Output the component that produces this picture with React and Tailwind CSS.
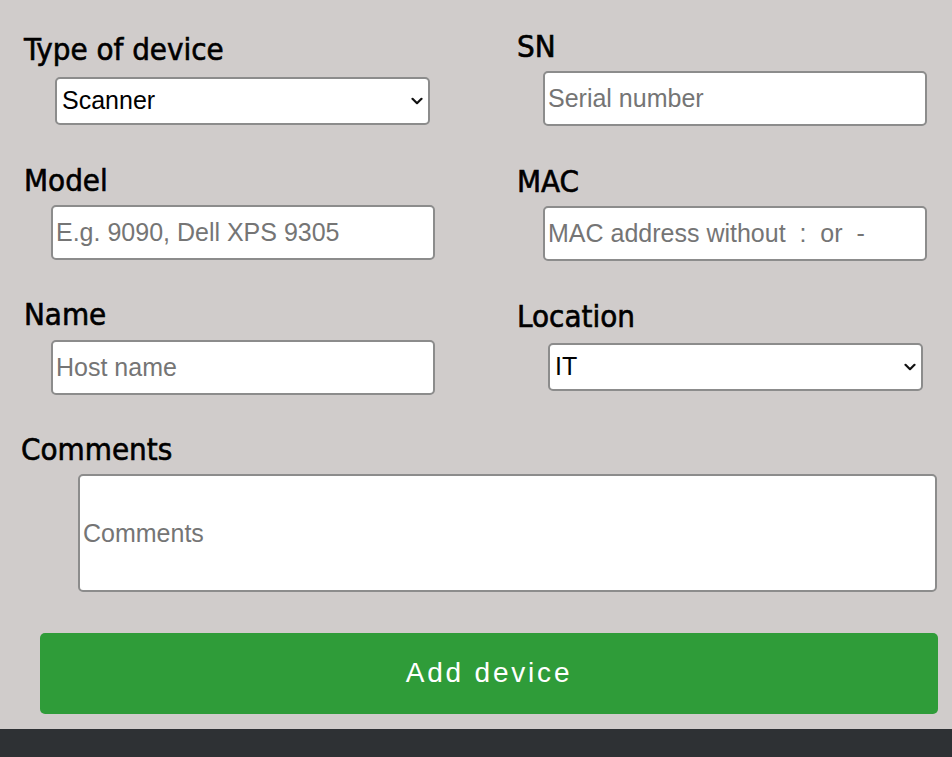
import React from 'react';

const labelFont = { fontFamily: '"DejaVu Sans Condensed", "DejaVu Sans", sans-serif' };

const Label = ({ children, className = '' }) => (
  <label
    className={`block h-[36px] leading-[36px] text-[31px] text-black [-webkit-text-stroke:0.6px_black] ${className}`}
    style={labelFont}
  >
    {children}
  </label>
);

const inputClasses =
  'block h-[55px] border-2 border-[#8c8c8c] rounded-[5px] bg-white px-[3px] text-[25px] text-black placeholder:text-[#757575] outline-none';

const Select = ({ className = '', options, value }) => (
  <div className={`relative ${className}`}>
    <select
      className="block w-full h-[48px] appearance-none border-2 border-[#8c8c8c] rounded-[5px] bg-white pl-[5px] pr-[30px] text-[25px] text-black outline-none"
      defaultValue={value}
    >
      {options.map((o) => (
        <option key={o}>{o}</option>
      ))}
    </select>
    <svg
      className="pointer-events-none absolute right-[7px] top-1/2 -translate-y-1/2"
      width="12"
      height="8"
      viewBox="0 0 12 8"
      fill="none"
    >
      <path d="M1.5 1.8 L6 6.2 L10.5 1.8" stroke="#111" strokeWidth="2.2" strokeLinecap="round" strokeLinejoin="round" />
    </svg>
  </div>
);

export default function App() {
  return (
    <div className="min-h-screen bg-[#d0cccb] flex flex-col" style={{ fontFamily: '"Liberation Sans", Arial, sans-serif' }}>
      {/* row 1 */}
      <div className="grid grid-cols-[493px_1fr]">
        <div className="pl-[24px]">
          <Label className="mt-[31px]">Type of device</Label>
          <Select className="ml-[31px] mt-[10px] w-[375px]" value="Scanner" options={['Scanner', 'Laptop', 'Desktop', 'Printer']} />
        </div>
        <div className="pl-[24px]">
          <Label className="mt-[28px]">SN</Label>
          <input className={`${inputClasses} ml-[26px] mt-[7px] w-[384px]`} placeholder="Serial number" />
        </div>
      </div>

      {/* row 2 */}
      <div className="grid grid-cols-[493px_1fr]">
        <div className="pl-[24px]">
          <Label className="mt-[36px]">Model</Label>
          <input className={`${inputClasses} ml-[27px] mt-[7px] w-[384px]`} placeholder="E.g. 9090, Dell XPS 9305" />
        </div>
        <div className="pl-[24px]">
          <Label className="mt-[37px]">MAC</Label>
          <input className={`${inputClasses} ml-[26px] mt-[6.5px] w-[384px]`} placeholder="MAC address without  :  or  -" />
        </div>
      </div>

      {/* row 3 */}
      <div className="grid grid-cols-[493px_1fr]">
        <div className="pl-[24px]">
          <Label className="mt-[35.5px]">Name</Label>
          <input className={`${inputClasses} ml-[27px] mt-[7.5px] w-[384px]`} placeholder="Host name" />
        </div>
        <div className="pl-[24px]">
          <Label className="mt-[37px]">Location</Label>
          <Select className="ml-[31px] mt-[9px] w-[375px]" value="IT" options={['IT', 'HR', 'Finance']} />
        </div>
      </div>

      {/* comments */}
      <div className="pl-[21px]">
        <Label className="mt-[36px]">Comments</Label>
        <input className={`${inputClasses} ml-[57px] mt-[7.5px] w-[859px] h-[118px]`} placeholder="Comments" />
      </div>

      <div className="pl-[40px] pr-[14px] mt-[40.5px]">
        <button className="w-full h-[81px] rounded-[5px] bg-[#2f9c39] text-white text-[28px] tracking-[2.8px] cursor-pointer">
          Add device
        </button>
      </div>

      <footer className="mt-[15px] h-[40px] bg-[#2e3134]" />
    </div>
  );
}
